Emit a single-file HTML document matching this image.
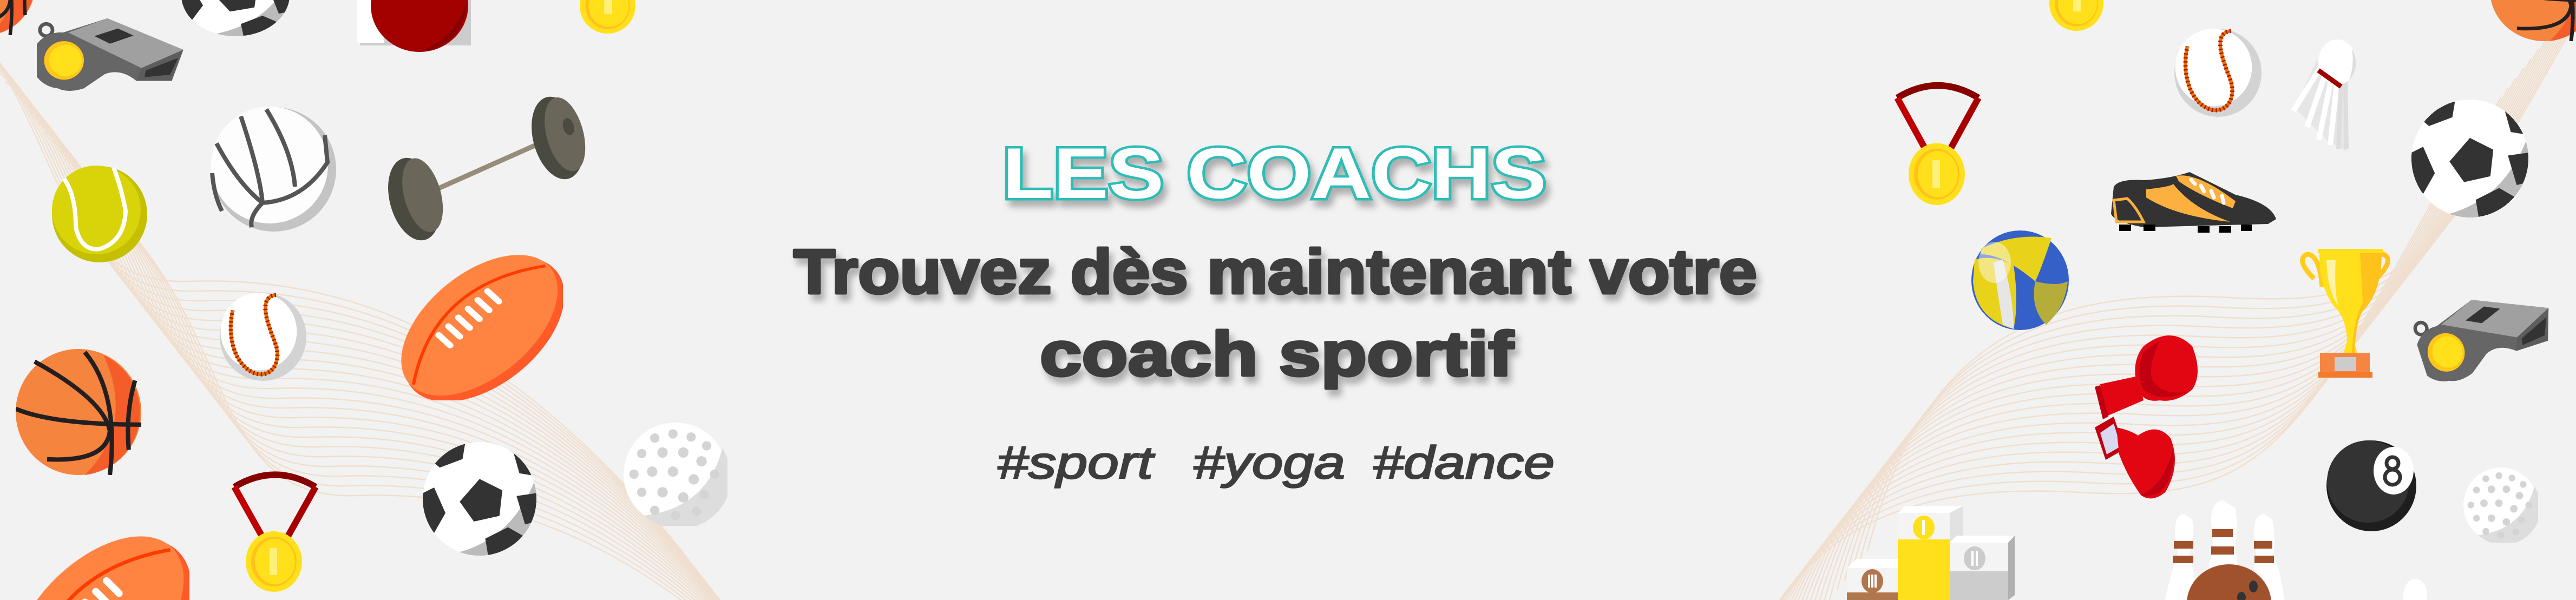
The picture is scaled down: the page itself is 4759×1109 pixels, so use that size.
<!DOCTYPE html>
<html><head><meta charset="utf-8"><style>
html,body{margin:0;padding:0;background:#f2f2f2;}
body{width:4759px;height:1109px;overflow:hidden;position:relative;}
svg{display:block;overflow:hidden;position:absolute;left:0;top:0;}
</style></head><body>
<svg width="4759" height="1109" viewBox="0 0 4759 1109" xmlns="http://www.w3.org/2000/svg">
<defs>
<filter id="sh" x="-10%" y="-30%" width="130%" height="180%"><feDropShadow dx="7" dy="12" stdDeviation="6" flood-color="#000" flood-opacity="0.28"/></filter>
<symbol id="soccer" viewBox="0 0 200 200" preserveAspectRatio="none">
<clipPath id="sc"><circle cx="100" cy="100" r="100"/></clipPath>
<g clip-path="url(#sc)">
<circle cx="100" cy="100" r="100" fill="#fff"/>
<path d="M200 60 A100 100 0 0 1 60 195 Q160 170 200 60Z" fill="#bbb"/>
<polygon points="100,65 140,85 135,130 90,140 65,105" fill="#333"/>
<polygon points="20,0 75,0 70,30 30,45 0,20" fill="#333"/>
<polygon points="150,0 200,0 200,60 170,55 160,20" fill="#333"/>
<polygon points="0,90 20,80 40,125 20,160 0,150" fill="#333"/>
<polygon points="110,170 150,150 185,170 170,200 115,200" fill="#333"/>
<polygon points="165,95 200,90 200,140 180,145" fill="#333"/>
</g></symbol>
<symbol id="golf" viewBox="0 0 200 200" preserveAspectRatio="none">
<circle cx="100" cy="100" r="100" fill="#fff"/>
<path d="M190 50 A100 100 0 0 1 40 180 Q160 165 190 50Z" fill="#ddd"/>
<g fill="#d4d4d4">
<circle cx="60" cy="30" r="9"/><circle cx="95" cy="22" r="9"/><circle cx="130" cy="28" r="9"/><circle cx="160" cy="45" r="9"/>
<circle cx="35" cy="60" r="9"/><circle cx="75" cy="58" r="10"/><circle cx="115" cy="58" r="10"/><circle cx="150" cy="75" r="10"/>
<circle cx="20" cy="100" r="9"/><circle cx="55" cy="95" r="10"/><circle cx="95" cy="95" r="10"/><circle cx="135" cy="110" r="10"/><circle cx="175" cy="100" r="9"/>
<circle cx="35" cy="135" r="9"/><circle cx="75" cy="135" r="10"/><circle cx="115" cy="145" r="10"/><circle cx="155" cy="140" r="9"/>
<circle cx="60" cy="170" r="9"/><circle cx="100" cy="180" r="9"/><circle cx="140" cy="172" r="9"/>
</g></symbol>
<symbol id="baseball" viewBox="0 0 200 200" preserveAspectRatio="none">
<circle cx="100" cy="100" r="100" fill="#d3d3d3"/>
<circle cx="90" cy="88" r="88" fill="#fff"/>
<path d="M130 5 C80 10 120 90 130 120 C145 175 100 205 60 170 C25 140 20 80 30 40" fill="none" stroke="#e87000" stroke-width="8"/>
<path d="M130 5 C80 10 120 90 130 120 C145 175 100 205 60 170 C25 140 20 80 30 40" fill="none" stroke="#9a0000" stroke-width="10" stroke-dasharray="3 6" opacity="0.8"/>
</symbol>
<symbol id="bball" viewBox="0 0 200 200" preserveAspectRatio="none">
<circle cx="100" cy="100" r="100" fill="#f5843f"/>
<path d="M140 10 A100 100 0 0 1 110 200 Q190 120 140 10Z" fill="#f45d2a"/>
<g fill="none" stroke="#231f20" stroke-width="7">
<path d="M0 95 Q60 120 200 120"/>
<path d="M30 20 Q140 80 150 130 Q145 180 50 175"/>
<path d="M110 5 Q165 70 150 200"/>
<path d="M190 50 Q175 100 180 160"/>
</g></symbol>
<symbol id="fball" viewBox="0 0 200 200" preserveAspectRatio="none">
<g transform="rotate(-45 100 100)">
<ellipse cx="100" cy="104" rx="120" ry="72" fill="#ff5a28"/>
<ellipse cx="100" cy="96" rx="118" ry="68" fill="#ff8442"/>
<path d="M-15 96 Q100 15 215 96" fill="none" stroke="#ff3c00" stroke-width="4"/>
<g stroke="#fff" stroke-width="8" stroke-linecap="round">
<line x1="55" y1="70" x2="55" y2="90"/><line x1="72" y1="70" x2="72" y2="90"/><line x1="89" y1="70" x2="89" y2="90"/><line x1="106" y1="70" x2="106" y2="90"/><line x1="123" y1="70" x2="123" y2="90"/><line x1="140" y1="70" x2="140" y2="90"/>
</g></g></symbol>
<symbol id="medal" viewBox="0 0 160 240" preserveAspectRatio="none">
<path d="M5 45 Q80 0 155 45" fill="none" stroke="#860000" stroke-width="12"/>
<path d="M5 45 L75 170" stroke="#c00000" stroke-width="12"/>
<path d="M155 45 L85 170" stroke="#a80000" stroke-width="12"/>
<ellipse cx="78" cy="183" rx="52" ry="56" fill="#ffe01a"/>
<ellipse cx="78" cy="183" rx="42" ry="46" fill="#ffc21a"/>
<ellipse cx="80" cy="183" rx="37" ry="42" fill="#ffe01a"/>
<rect x="70" y="158" width="14" height="50" fill="#fff07a"/>
</symbol>
<symbol id="coin" viewBox="0 0 100 100" preserveAspectRatio="none">
<ellipse cx="50" cy="50" rx="50" ry="50" fill="#ffe01a"/>
<ellipse cx="50" cy="50" rx="40" ry="42" fill="#ffc21a"/>
<ellipse cx="52" cy="50" rx="36" ry="38" fill="#ffe01a"/>
<rect x="44" y="15" width="14" height="50" fill="#fff07a"/>
</symbol>
<symbol id="whistle" viewBox="0 0 300 160" preserveAspectRatio="none">
<circle cx="18" cy="25" r="12" fill="none" stroke="#555" stroke-width="7"/>
<path d="M50 30 L135 2 L280 64 L258 125 L190 125 Q160 100 130 112 L90 140 Q60 150 40 140 A55 55 0 0 1 50 30Z" fill="#666"/>
<polygon points="60,30 135,2 280,64 200,100 140,70" fill="#a0a0a0"/>
<polygon points="200,100 280,64 258,125 190,125" fill="#5d5d5d"/>
<polygon points="208,105 270,80 255,113 206,118" fill="#333"/>
<polygon points="110,37 155,22 185,36 140,52" fill="#333"/>
<circle cx="52" cy="85" r="38" fill="#ffc61a"/>
<circle cx="55" cy="85" r="31" fill="#ffe01a"/>
</symbol>
<g id="wl" fill="none" stroke-width="2.5">
<path d="M-60 60 C200 280 140 620 420 610 S1000 700 1330 1109"/>
</g>
<g id="wr" fill="none" stroke-width="2.5">
<path d="M3380 1109 C3480 720 3700 620 4050 640 S4450 560 4760 0"/>
</g>
</defs>

<rect width="4759" height="1109" fill="#f2f2f2"/>

<g stroke="#f0d7c0" opacity="0.7">
<use href="#wl" transform="translate(0,0)"/><use href="#wl" transform="translate(14,18)"/><use href="#wl" transform="translate(28,36)"/><use href="#wl" transform="translate(42,54)"/><use href="#wl" transform="translate(56,72)"/><use href="#wl" transform="translate(70,90)"/><use href="#wl" transform="translate(84,108)"/><use href="#wl" transform="translate(98,126)"/><use href="#wl" transform="translate(112,144)"/><use href="#wl" transform="translate(126,162)"/><use href="#wl" transform="translate(140,180)"/><use href="#wl" transform="translate(154,198)"/><use href="#wl" transform="translate(168,216)"/><use href="#wl" transform="translate(182,234)"/><use href="#wl" transform="translate(196,252)"/><use href="#wl" transform="translate(210,270)"/><use href="#wl" transform="translate(224,288)"/><use href="#wl" transform="translate(238,306)"/><use href="#wl" transform="translate(-14,-18)"/><use href="#wl" transform="translate(-28,-36)"/><use href="#wl" transform="translate(-42,-54)"/><use href="#wl" transform="translate(-56,-72)"/><use href="#wl" transform="translate(-70,-90)"/>
<use href="#wr" transform="translate(0,0)"/><use href="#wr" transform="translate(-14,18)"/><use href="#wr" transform="translate(-28,36)"/><use href="#wr" transform="translate(-42,54)"/><use href="#wr" transform="translate(-56,72)"/><use href="#wr" transform="translate(-70,90)"/><use href="#wr" transform="translate(-84,108)"/><use href="#wr" transform="translate(-98,126)"/><use href="#wr" transform="translate(-112,144)"/><use href="#wr" transform="translate(-126,162)"/><use href="#wr" transform="translate(-140,180)"/><use href="#wr" transform="translate(-154,198)"/><use href="#wr" transform="translate(-168,216)"/><use href="#wr" transform="translate(-182,234)"/><use href="#wr" transform="translate(-196,252)"/><use href="#wr" transform="translate(-210,270)"/><use href="#wr" transform="translate(14,-18)"/><use href="#wr" transform="translate(28,-36)"/><use href="#wr" transform="translate(42,-54)"/><use href="#wr" transform="translate(56,-72)"/><use href="#wr" transform="translate(70,-90)"/>
</g>

<use href="#bball" x="-120" y="-120" width="185" height="185"/>
<use href="#whistle" x="68" y="32" width="290" height="150"/>
<g transform="translate(335,-85)"><use href="#soccer" x="0" y="0" width="200" height="152"/></g>
<g>
<rect x="665" y="0" width="205" height="84" fill="#ccc"/><rect x="660" y="0" width="50" height="80" fill="#fff"/>
<ellipse cx="775" cy="10" rx="90" ry="86" fill="#a30000"/><path d="M860 10 A90 86 0 0 1 775 96 Q840 70 860 10Z" fill="#850000"/>
</g>
<use href="#coin" x="1071" y="-40" width="103" height="102"/>
<g>
<ellipse cx="506" cy="313" rx="115" ry="115" fill="#c4c4c4"/>
<ellipse cx="498" cy="305" rx="108" ry="108" fill="#fdfdfd"/>
<g fill="none" stroke="#555" stroke-width="8">
<path d="M445 215 Q480 320 485 375"/><path d="M492 202 Q540 280 545 345"/><path d="M400 265 Q440 340 485 375"/><path d="M485 375 Q560 370 605 300 L600 250"/><path d="M485 375 Q460 400 465 420"/><path d="M392 320 Q395 360 410 390"/>
</g></g>
<line x1="788" y1="358" x2="990" y2="268" stroke="#968c7a" stroke-width="9"/>
<g transform="rotate(-15 765 368)"><ellipse cx="765" cy="368" rx="45" ry="78" fill="#4a4a40"/><ellipse cx="782" cy="365" rx="34" ry="70" fill="#6a6659"/></g>
<g transform="rotate(-15 1030 255)"><ellipse cx="1030" cy="255" rx="45" ry="78" fill="#4a4a40"/><ellipse cx="1045" cy="252" rx="34" ry="70" fill="#6a6659"/><ellipse cx="1055" cy="240" rx="10" ry="16" fill="#4a4a40"/></g>
<g>
<ellipse cx="184" cy="396" rx="88" ry="89" fill="#c4bf00"/>
<ellipse cx="178" cy="388" rx="82" ry="82" fill="#d9d40a"/>
<path d="M118 330 Q140 360 140 420 Q150 465 185 460 Q230 445 232 390 Q225 350 210 310" fill="none" stroke="#fff" stroke-width="8"/>
</g>
<use href="#baseball" x="406" y="541" width="160" height="163"/>
<use href="#fball" x="740" y="470" width="300" height="270"/>
<use href="#bball" x="29" y="645" width="232" height="233"/>
<use href="#medal" x="428" y="855" width="160" height="240"/>
<use href="#fball" x="20" y="990" width="330" height="330"/>
<use href="#soccer" x="781" y="817" width="210" height="210"/>
<use href="#golf" x="1152" y="781" width="192" height="191"/>

<use href="#coin" x="3786" y="-45" width="100" height="102"/>
<use href="#medal" x="3500" y="135" width="160" height="245"/>
<use href="#baseball" x="4017" y="53" width="161" height="163"/>
<g>
<polygon points="4280,110 4330,140 4335,280 4300,260 4240,200" fill="#e6e6e6"/>
<g stroke="#fff" stroke-width="10"><line x1="4290" y1="120" x2="4237" y2="205"/><line x1="4298" y1="130" x2="4262" y2="235"/><line x1="4308" y1="140" x2="4284" y2="258"/><line x1="4318" y1="145" x2="4305" y2="268"/></g>
<g stroke="#ddd" stroke-width="8"><line x1="4325" y1="150" x2="4320" y2="275"/><line x1="4333" y1="150" x2="4335" y2="275"/></g>
<ellipse cx="4318" cy="115" rx="35" ry="42" fill="#fff"/><path d="M4345 90 A35 42 0 0 1 4340 148 Q4350 120 4345 90Z" fill="#ddd"/>
<line x1="4283" y1="130" x2="4325" y2="160" stroke="#a00000" stroke-width="9"/>
</g>
<use href="#soccer" x="4455" y="184" width="216" height="218"/>
<use href="#bball" x="4600" y="-112" width="200" height="188"/>
<g>
<path d="M3905 345 Q3915 330 3960 333 Q4010 330 4045 318 Q4090 340 4130 360 Q4195 375 4205 405 L4190 414 L3960 420 Q3905 410 3900 395Z" fill="#333"/>
<rect x="3915" y="415" width="22" height="12" fill="#000"/><rect x="3960" y="415" width="22" height="12" fill="#000"/><rect x="4060" y="418" width="22" height="12" fill="#000"/><rect x="4100" y="418" width="22" height="12" fill="#000"/><rect x="4140" y="415" width="20" height="12" fill="#000"/>
<path d="M3965 350 Q4010 345 4015 340 Q4050 385 4120 410 Q4020 400 3965 365Z" fill="#fbb040"/>
<path d="M4020 325 Q4060 318 4130 372 L4125 385 Q4060 360 4025 335Z" fill="#fbb040"/>
<g stroke="#fff" stroke-width="7" stroke-linecap="round"><line x1="4048" y1="332" x2="4055" y2="340"/><line x1="4066" y1="343" x2="4072" y2="354"/><line x1="4085" y1="353" x2="4090" y2="365"/><line x1="4105" y1="362" x2="4108" y2="375"/></g>
<path d="M3905 370 L3930 367 Q3945 380 3960 410 L3910 410Z" fill="none" stroke="#fbb040" stroke-width="5"/>
</g>
<g>
<ellipse cx="3732" cy="518" rx="90" ry="92" fill="#3560c8"/>
<path d="M3660 460 Q3720 430 3790 440 Q3770 500 3760 520 Q3700 470 3660 470Z" fill="#e8d21a"/>
<path d="M3645 520 Q3650 590 3720 608 Q3730 560 3720 490 Q3680 470 3648 480Z" fill="#e8d21a"/>
<path d="M3760 520 Q3800 530 3820 520 Q3815 570 3780 600 Q3750 570 3760 520Z" fill="#b5ad3a"/>
<path d="M3700 480 Q3720 550 3720 608 L3700 600 Q3690 540 3683 485Z" fill="#e6e6e6"/>
<ellipse cx="3685" cy="485" rx="30" ry="38" fill="#fff" opacity="0.45"/>
</g>
<g>
<path d="M4275 515 Q4240 480 4262 470 Q4285 470 4290 530" fill="none" stroke="#ffcc1a" stroke-width="9"/>
<path d="M4390 515 Q4425 480 4403 470 Q4380 470 4375 530" fill="none" stroke="#ffc21a" stroke-width="9"/>
<rect x="4282" y="460" width="120" height="8" fill="#ffe01a"/>
<path d="M4285 468 L4400 468 Q4400 540 4365 575 Q4350 595 4348 630 L4355 652 L4330 652 L4336 630 Q4335 595 4320 575 Q4285 540 4285 468Z" fill="#ffe01a"/>
<path d="M4360 468 L4400 468 Q4400 540 4365 575 Q4352 595 4350 652 L4345 652 Q4348 590 4365 560Z" fill="#ffc21a"/>
<path d="M4298 480 L4315 480 Q4312 540 4320 565 Q4300 540 4298 480Z" fill="#fff3a8"/>
<rect x="4286" y="652" width="92" height="38" fill="#f58543"/>
<rect x="4283" y="688" width="100" height="10" fill="#f47a2c"/>
<rect x="4313" y="660" width="40" height="26" fill="#ccc"/>
</g>
<g transform="translate(4450,590) rotate(-18)"><use href="#whistle" x="0" y="0" width="270" height="150"/></g>
<g>
<path d="M3960 640 Q4010 600 4050 640 Q4070 690 4050 720 Q4020 745 3990 740 Q3960 745 3950 720 Q3935 670 3960 640Z" fill="#e20613"/>
<path d="M3960 650 Q3945 690 3960 720 Q3990 745 4040 725 Q3990 730 3975 700 Q3970 670 3990 630Z" fill="#c00010"/>
<polygon points="3880,710 3950,695 3960,740 3890,770" fill="#e20613"/>
<polygon points="3870,715 3880,712 3895,770 3885,775" fill="#c00010"/>
<path d="M3870 790 L3905 770 L3925 830 L3890 850Z" fill="#c00010"/>
<path d="M3880 800 L3905 783 L3918 825 L3892 840Z" fill="#d8d8f0"/>
<path d="M3910 790 Q3935 795 3950 805 Q3985 780 4010 810 Q4030 860 4000 910 Q3975 930 3955 915 Q3930 880 3915 840Z" fill="#e20613"/>
<path d="M4015 830 Q4020 880 3990 910 Q3965 920 3955 915 Q3995 900 4015 830Z" fill="#c00010"/>
</g>
<g>
<ellipse cx="4381" cy="898" rx="83" ry="84" fill="#1e1e1e"/>
<ellipse cx="4375" cy="890" rx="76" ry="76" fill="#333"/>
<ellipse cx="4422" cy="870" rx="37" ry="44" fill="#fff"/>
<circle cx="4420" cy="856" r="11" fill="none" stroke="#333" stroke-width="7"/><circle cx="4420" cy="882" r="14" fill="none" stroke="#333" stroke-width="7"/>
</g>
<use href="#golf" x="4551" y="864" width="138" height="139"/>
<g>
<polygon points="3412,1050 3430,1033 3506,1033 3506,1050" fill="#fff"/>
<rect x="3412" y="1050" width="94" height="45" fill="#f4f4f4"/>
<rect x="3412" y="1095" width="94" height="14" fill="#b0764e"/>
<ellipse cx="3459" cy="1074" rx="20" ry="22" fill="#b0764e"/>
<g fill="#fff"><rect x="3451" y="1062" width="4" height="24"/><rect x="3457" y="1062" width="4" height="24"/><rect x="3463" y="1062" width="4" height="24"/></g>
<polygon points="3506,948 3520,935 3627,935 3602,948" fill="#fff"/>
<rect x="3506" y="948" width="96" height="50" fill="#f4f4f4"/>
<polygon points="3602,948 3627,935 3627,990 3602,1000" fill="#e2e2e2"/>
<rect x="3506" y="997" width="96" height="112" fill="#ffe01a"/>
<ellipse cx="3554" cy="975" rx="20" ry="22" fill="#ffe01a"/><rect x="3551" y="961" width="5" height="28" fill="#fff"/>
<polygon points="3602,1003 3615,990 3722,990 3710,1003" fill="#fff"/>
<rect x="3602" y="1003" width="108" height="53" fill="#f4f4f4"/>
<rect x="3602" y="1056" width="108" height="53" fill="#cccccc"/>
<polygon points="3710,1003 3722,990 3722,1100 3710,1109" fill="#b0b0b0"/>
<ellipse cx="3648" cy="1032" rx="20" ry="22" fill="#ccc"/><rect x="3642" y="1018" width="4" height="28" fill="#fff"/><rect x="3650" y="1018" width="4" height="28" fill="#fff"/>
</g>
<g>
<path d="M4035 950 Q4017 950 4018 990 Q4025 1010 4022 1025 Q4005 1080 4000 1109 L4060 1109 Q4055 1060 4045 1025 Q4055 990 4050 960Z" fill="#fff"/>
<rect x="4016" y="1000" width="36" height="14" fill="#a0522d"/><rect x="4014" y="1027" width="38" height="14" fill="#a0522d"/>
<path d="M4108 925 Q4085 925 4085 965 Q4090 1000 4088 1015 Q4075 1070 4070 1109 L4145 1109 Q4140 1060 4128 1015 Q4135 980 4130 940Z" fill="#fff"/>
<rect x="4087" y="978" width="38" height="15" fill="#a0522d"/><rect x="4085" y="1010" width="42" height="15" fill="#a0522d"/>
<path d="M4183 950 Q4162 950 4164 990 Q4170 1010 4168 1025 Q4160 1080 4160 1109 L4220 1109 Q4215 1060 4200 1025 Q4205 990 4198 960Z" fill="#fff"/>
<rect x="4164" y="1000" width="34" height="14" fill="#a0522d"/><rect x="4165" y="1027" width="36" height="14" fill="#a0522d"/>
<ellipse cx="4118" cy="1115" rx="78" ry="72" fill="#a0522d"/>
<ellipse cx="4163" cy="1084" rx="8" ry="11" fill="#333"/><ellipse cx="4141" cy="1104" rx="8" ry="10" fill="#333"/>
<ellipse cx="4462" cy="1100" rx="22" ry="30" fill="#fff"/>
</g>

<g font-family="'Liberation Sans', 'DejaVu Sans', sans-serif">
<text x="1852" y="366" font-size="133" font-weight="bold" fill="#fff" stroke="#2dbdb6" stroke-width="9" paint-order="stroke fill" textLength="1005" lengthAdjust="spacingAndGlyphs" filter="url(#sh)">LES COACHS</text>
<g fill="#3d3d3d" stroke="#3d3d3d" stroke-width="5" stroke-linejoin="round" filter="url(#sh)" font-weight="bold">
<text x="1466" y="542" font-size="116" textLength="1780" lengthAdjust="spacingAndGlyphs">Trouvez dès maintenant votre</text>
<text x="1921" y="694" font-size="116" textLength="875" lengthAdjust="spacingAndGlyphs">coach sportif</text>
</g>
<g fill="#3d3d3d" stroke="#3d3d3d" stroke-width="2.5" font-style="italic" font-size="84">
<text x="1842" y="884" textLength="288" lengthAdjust="spacingAndGlyphs">#sport</text>
<text x="2204" y="884" textLength="281" lengthAdjust="spacingAndGlyphs">#yoga</text>
<text x="2536" y="884" textLength="336" lengthAdjust="spacingAndGlyphs">#dance</text>
</g>
</g>
</svg>
</body></html>
